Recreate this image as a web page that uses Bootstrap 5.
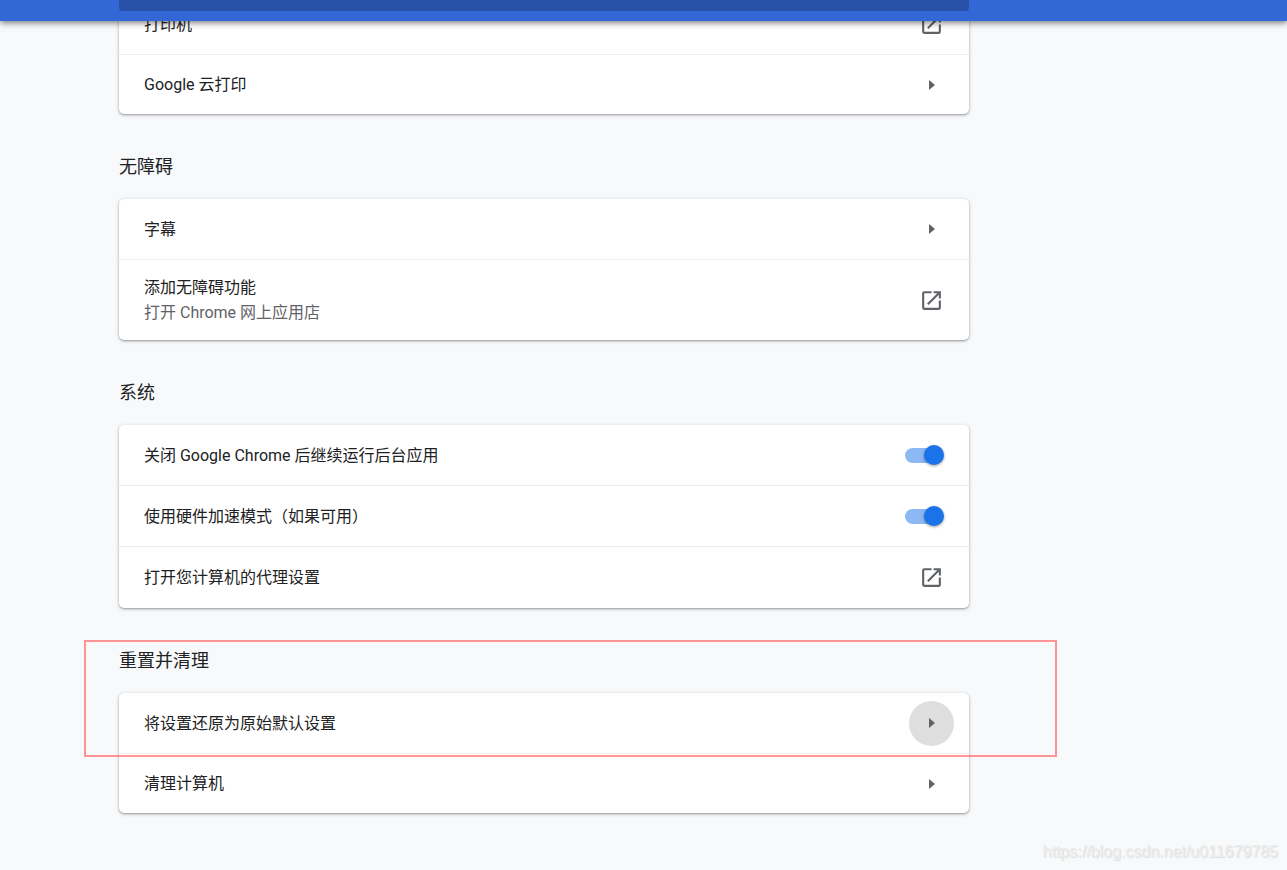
<!DOCTYPE html>
<html lang="zh-CN">
<head>
<meta charset="utf-8">
<meta name="viewport" content="width=device-width, initial-scale=1">
<title>设置</title>
<link rel="stylesheet" href="https://cdn.jsdelivr.net/npm/bootstrap@5.3.0/dist/css/bootstrap.min.css">
<style>
  body { background: #f8f9fb; color: #202124; font-family: Roboto, "Noto Sans CJK SC", sans-serif; font-size: 16px; line-height: 25px; }
  .toolbar { height: 21px; background: #3367d6; box-shadow: 0 2px 6px rgba(0,0,0,.5); padding-left: 119px; }
  .column { max-width: 850px; }
  .search-box { height: 11px; background: #2850a7; border-radius: 0 0 4px 4px; color: #fff; outline: 0; }
  .page { margin-top: -27px; padding-left: 119px; }
  .section-title { font-size: 18px; line-height: 25px; font-weight: 400; margin: 0; padding: 40px 0 20px; }
  .settings-card { background: #fff; border-radius: 5px; box-shadow: 0 1px 2px rgba(60,64,67,.4), 0 1px 4px rgba(60,64,67,.2); }
  .setting-row { min-height: 60px; padding: 0 15px 0 25px; }
  .setting-row + .setting-row { border-top: 1px solid #ececed; }
  .setting-row.tall { padding-top: 15px; padding-bottom: 15px; }
  .system-card { padding-bottom: 1px; }
  .system-card .setting-row + .setting-row { min-height: 61px; }
  .hint { color: #5f6368; }
  .round-btn { width: 45px; height: 45px; margin: -10px 0; color: #5f6368; background: transparent; }
  .round-btn.pressed { background: #dedede; }
  .toggle { appearance: none; position: relative; width: 39px; height: 20px; margin: 0 10px 0 0; }
  .toggle::before { content: ""; position: absolute; left: 0; top: 3px; width: 35px; height: 15px; border-radius: 8px; background: #8cb8f4; }
  .toggle::after { content: ""; position: absolute; right: 0; top: 0; width: 20px; height: 20px; border-radius: 50%; background: #1a73e8; box-shadow: 0 1px 3px rgba(0,0,0,.4); }
  .highlight-frame { left: -35px; right: -88px; top: 32px; height: 117px; border: 2px solid rgba(255,48,48,.5); pointer-events: none; }
  .watermark { font-family: "Liberation Sans", sans-serif; color: #eceded; text-shadow: 1px 1px 1px #dadbdd; padding: 26px 9px 6px 0; }
</style>
</head>
<body>
<svg class="d-none">
  <symbol id="launch" viewBox="0 0 24 24"><path fill="currentColor" d="M19 19H5V5h7V3H5a2 2 0 0 0-2 2v14a2 2 0 0 0 2 2h14c1.100 0 2-.9 2-2v-7h-2v7zM14 3v2h3.590l-9.830 9.830 1.410 1.410L19 6.410V10h2V3h-7z"/></symbol>
  <symbol id="arrow" viewBox="0 0 6 10"><path fill="currentColor" d="M0 0l6 5-6 5z"/></symbol>
</svg>

<header class="toolbar sticky-top">
  <div class="column"><input type="search" class="search-box d-block w-100 border-0 p-0" aria-label="搜索设置"></div>
</header>

<main class="page">
  <section class="column settings-card">
    <div class="setting-row d-flex align-items-center justify-content-between">
      <span>打印机</span>
      <button type="button" class="round-btn btn border-0 rounded-circle p-0 d-flex align-items-center justify-content-center" aria-label="打印机"><svg width="25" height="25"><use href="#launch"/></svg></button>
    </div>
    <div class="setting-row d-flex align-items-center justify-content-between">
      <span>Google 云打印</span>
      <button type="button" class="round-btn btn border-0 rounded-circle p-0 d-flex align-items-center justify-content-center" aria-label="Google 云打印"><svg width="6" height="10"><use href="#arrow"/></svg></button>
    </div>
  </section>

  <section class="column">
    <h2 class="section-title">无障碍</h2>
    <div class="settings-card">
      <div class="setting-row d-flex align-items-center justify-content-between">
        <span>字幕</span>
        <button type="button" class="round-btn btn border-0 rounded-circle p-0 d-flex align-items-center justify-content-center" aria-label="字幕"><svg width="6" height="10"><use href="#arrow"/></svg></button>
      </div>
      <div class="setting-row tall d-flex align-items-center justify-content-between">
        <div>
          <div>添加无障碍功能</div>
          <div class="hint">打开 Chrome 网上应用店</div>
        </div>
        <button type="button" class="round-btn btn border-0 rounded-circle p-0 d-flex align-items-center justify-content-center" aria-label="添加无障碍功能"><svg width="25" height="25"><use href="#launch"/></svg></button>
      </div>
    </div>
  </section>

  <section class="column">
    <h2 class="section-title">系统</h2>
    <div class="settings-card system-card">
      <div class="setting-row d-flex align-items-center justify-content-between">
        <label for="background-apps">关闭 Google Chrome 后继续运行后台应用</label>
        <input type="checkbox" role="switch" class="toggle" id="background-apps" checked>
      </div>
      <div class="setting-row d-flex align-items-center justify-content-between">
        <label for="hardware-mode">使用硬件加速模式（如果可用）</label>
        <input type="checkbox" role="switch" class="toggle" id="hardware-mode" checked>
      </div>
      <div class="setting-row d-flex align-items-center justify-content-between">
        <span>打开您计算机的代理设置</span>
        <button type="button" class="round-btn btn border-0 rounded-circle p-0 d-flex align-items-center justify-content-center" aria-label="打开您计算机的代理设置"><svg width="25" height="25"><use href="#launch"/></svg></button>
      </div>
    </div>
  </section>

  <section class="column position-relative">
    <h2 class="section-title">重置并清理</h2>
    <div class="settings-card">
      <div class="setting-row d-flex align-items-center justify-content-between">
        <span>将设置还原为原始默认设置</span>
        <button type="button" class="round-btn pressed btn border-0 rounded-circle p-0 d-flex align-items-center justify-content-center" aria-label="将设置还原为原始默认设置"><svg width="6" height="10"><use href="#arrow"/></svg></button>
      </div>
      <div class="setting-row d-flex align-items-center justify-content-between">
        <span>清理计算机</span>
        <button type="button" class="round-btn btn border-0 rounded-circle p-0 d-flex align-items-center justify-content-center" aria-label="清理计算机"><svg width="6" height="10"><use href="#arrow"/></svg></button>
      </div>
    </div>
    <div class="highlight-frame position-absolute"></div>
  </section>
</main>

<footer class="watermark text-end">https://blog.csdn.net/u011679785</footer>
<script src="https://cdn.jsdelivr.net/npm/bootstrap@5.3.0/dist/js/bootstrap.bundle.min.js"></script>
</body>
</html>
